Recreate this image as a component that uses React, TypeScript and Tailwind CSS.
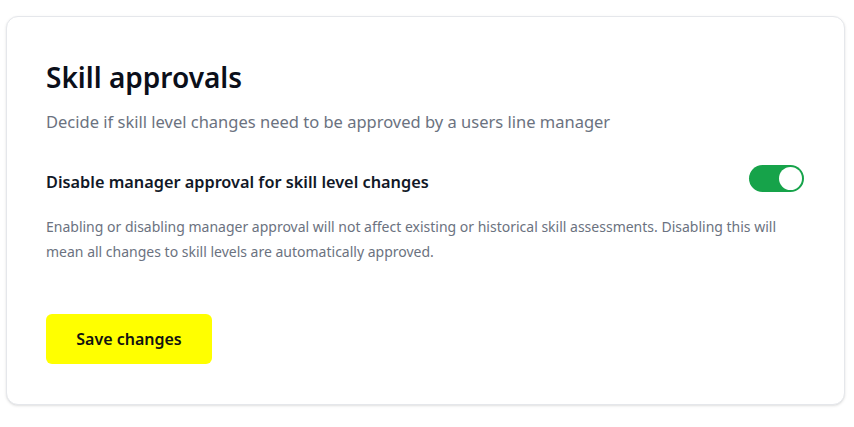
import { useState } from 'react'

export default function App() {
  const [enabled, setEnabled] = useState(true)

  return (
    <div className="min-h-screen bg-white pl-[6px] pr-[9px] pt-4 font-['Noto_Sans',sans-serif]">
      <div className="rounded-xl border border-gray-200 bg-white px-[39px] pt-[42px] pb-10 shadow-sm">
        <h2 className="text-[28px] font-semibold leading-9 text-[#0b0f1a]">Skill approvals</h2>
        <p className="mt-[15px] text-[16.5px] leading-6 text-[#6b7280]">
          Decide if skill level changes need to be approved by a users line manager
        </p>

        {/* Toggle row */}
        <div className="mt-[35px] flex items-center justify-between">
          <span className="text-[16.3px] font-semibold text-[#111827]">
            Disable manager approval for skill level changes
          </span>
          <button
            onClick={() => setEnabled(!enabled)}
            className={`mr-[1px] flex h-[27px] w-[55px] -translate-y-1 items-center rounded-full p-[2px] transition-colors ${
              enabled ? 'justify-end bg-[#16a34a]' : 'justify-start bg-gray-300'
            }`}
          >
            <span className="h-[23px] w-[23px] rounded-full bg-white" />
          </button>
        </div>

        <p className="mt-[18px] text-[14px] leading-[25px] text-[#6b7280]">
          Enabling or disabling manager approval will not affect existing or historical skill assessments. Disabling this will
          mean all changes to skill levels are automatically approved.
        </p>

        <button className="mt-[50px] h-[50px] w-[166px] rounded-md bg-[#ffff00] text-[16px] font-semibold text-[#111111]">
          Save changes
        </button>
      </div>
    </div>
  )
}
